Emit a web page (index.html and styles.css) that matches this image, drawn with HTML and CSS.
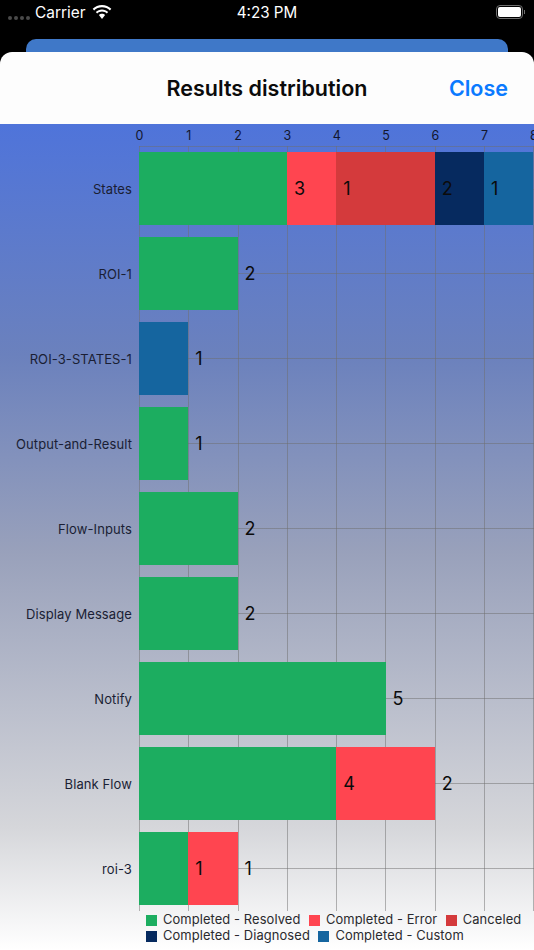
FILE: index.html
```html
<!DOCTYPE html>
<html lang="en">
<head>
    <meta charset="UTF-8">
    <meta name="viewport" content="width=device-width, initial-scale=1.0">
    <title>Results distribution</title>
    <link rel="stylesheet" href="styles.css">
</head>
<body>
    <div class="status-bar">
        <div class="signal"><i></i><i></i><i></i><i></i></div>
        <span class="carrier">Carrier</span>
        <svg class="wifi" width="20" height="15" viewBox="0 0 20 15">
            <path d="M10 2.2c3 0 5.8 1.2 7.9 3.2l1.4-1.6C16.800 1.400 13.500 0 10 0S3.200 1.400.7 3.800l1.400 1.600C4.200 3.400 7 2.200 10 2.200z" fill="#fff"/>
            <path d="M10 6.600c1.800 0 3.500.7 4.800 1.900l1.400-1.600C14.500 5.300 12.300 4.400 10 4.400s-4.500.9-6.200 2.500l1.400 1.600C6.500 7.300 8.200 6.600 10 6.600z" fill="#fff"/>
            <path d="M10 8.800c-1.200 0-2.300.5-3.100 1.200L10 14l3.100-4C12.300 9.300 11.200 8.800 10 8.800z" fill="#fff"/>
        </svg>
        <span class="time">4:23 PM</span>
        <div class="battery"><div class="battery-fill"></div></div>
        <div class="battery-cap"></div>
    </div>

    <div class="back-card"></div>

    <div class="sheet">
        <div class="sheet-header">
            <h1>Results distribution</h1>
            <a class="close">Close</a>
        </div>

        <div class="chart">
            <div class="axis">
                <span>0</span><span>1</span><span>2</span><span>3</span><span>4</span><span>5</span><span>6</span><span>7</span><span>8</span>
            </div>

            <div class="rows">
                <div class="row">
                    <div class="row-label">States</div>
                    <div class="plot">
                        <div class="seg resolved" style="width: 147.9px"><span class="value">3</span></div>
                        <div class="seg error" style="width: 49.3px"><span class="value">1</span></div>
                        <div class="seg canceled" style="width: 98.6px"><span class="value">2</span></div>
                        <div class="seg diagnosed" style="width: 49.3px"><span class="value">1</span></div>
                        <div class="seg custom" style="width: 49.3px"></div>
                    </div>
                </div>
                <div class="row">
                    <div class="row-label">ROI-1</div>
                    <div class="plot">
                        <div class="seg resolved" style="width: 98.6px"><span class="value">2</span></div>
                    </div>
                </div>
                <div class="row">
                    <div class="row-label">ROI-3-STATES-1</div>
                    <div class="plot">
                        <div class="seg custom" style="width: 49.3px"><span class="value">1</span></div>
                    </div>
                </div>
                <div class="row">
                    <div class="row-label">Output-and-Result</div>
                    <div class="plot">
                        <div class="seg resolved" style="width: 49.3px"><span class="value">1</span></div>
                    </div>
                </div>
                <div class="row">
                    <div class="row-label">Flow-Inputs</div>
                    <div class="plot">
                        <div class="seg resolved" style="width: 98.6px"><span class="value">2</span></div>
                    </div>
                </div>
                <div class="row">
                    <div class="row-label">Display Message</div>
                    <div class="plot">
                        <div class="seg resolved" style="width: 98.6px"><span class="value">2</span></div>
                    </div>
                </div>
                <div class="row">
                    <div class="row-label">Notify</div>
                    <div class="plot">
                        <div class="seg resolved" style="width: 246.5px"><span class="value">5</span></div>
                    </div>
                </div>
                <div class="row">
                    <div class="row-label">Blank Flow</div>
                    <div class="plot">
                        <div class="seg resolved" style="width: 197.2px"><span class="value">4</span></div>
                        <div class="seg error" style="width: 98.6px"><span class="value">2</span></div>
                    </div>
                </div>
                <div class="row">
                    <div class="row-label">roi-3</div>
                    <div class="plot">
                        <div class="seg resolved" style="width: 49.3px"><span class="value">1</span></div>
                        <div class="seg error" style="width: 49.3px"><span class="value">1</span></div>
                    </div>
                </div>
            </div>

            <div class="legend">
                <div class="legend-item"><i class="resolved"></i>Completed - Resolved</div>
                <div class="legend-item"><i class="error"></i>Completed - Error</div>
                <div class="legend-item"><i class="canceled"></i>Canceled</div>
                <div class="legend-item"><i class="diagnosed"></i>Completed - Diagnosed</div>
                <div class="legend-item"><i class="custom"></i>Completed - Custom</div>
            </div>
        </div>
    </div>
</body>
</html>
```

FILE: styles.css
```css
html, body {
    margin: 0;
    height: 950px;
    overflow: hidden;
    background: #000;
    font-family: 'Inter', 'Liberation Sans', sans-serif;
}

/* status bar */
.status-bar {
    height: 52px;
    display: flex;
    align-items: flex-start;
    padding: 0 9px 0 8px;
    box-sizing: border-box;
    color: #fff;
    font-size: 15.4px;
    line-height: 26px;
}
.signal {
    display: flex;
    gap: 2px;
    margin-top: 16px;
    margin-right: 5px;
}
.signal i {
    width: 4px;
    height: 4px;
    border-radius: 50%;
    background: #4a4a4a;
}
.wifi {
    margin: 5px 0 0 7px;
}
.time {
    position: absolute;
    left: 0;
    right: 0;
    text-align: center;
    font-size: 15.2px;
}
.battery {
    margin-left: auto;
    margin-top: 5px;
    width: 27px;
    height: 14px;
    box-sizing: border-box;
    border: 1px solid #6e6e6e;
    border-radius: 4px;
    padding: 1px;
}
.battery-fill {
    height: 100%;
    background: #fff;
    border-radius: 2px;
}
.battery-cap {
    width: 1px;
    height: 4px;
    margin: 10px 0 0 1px;
    background: #6e6e6e;
}

/* card of the page behind the sheet */
.back-card {
    position: absolute;
    top: 39px;
    left: 26px;
    width: 482px;
    height: 40px;
    background: #3f78c8;
    border-radius: 10px 10px 0 0;
}

.sheet {
    position: relative;
    border-radius: 12px 12px 0 0;
    overflow: hidden;
}
.sheet-header {
    height: 72px;
    background: #fdfdfd;
    display: flex;
    align-items: center;
    justify-content: center;
}
.sheet-header h1 {
    margin: 0;
    font-size: 21.5px;
    font-weight: 600;
    color: #0b0b0b;
}
.close {
    position: absolute;
    top: 22px;
    right: 26px;
    font-size: 21.5px;
    line-height: 28px;
    font-weight: 600;
    color: #0a7aff;
}

/* chart */
.chart {
    height: 826px;
    overflow: hidden;
    background: linear-gradient(180deg, #4f74da 0%, #6b81bd 28%, #99a1bb 52%, #d5d6da 85%, #ffffff 100%);
}
.axis {
    height: 22px;
    display: flex;
    margin-left: 114.9px;
    width: 450px;
    font-size: 12.5px;
    line-height: 24px;
    color: #12162e;
}
.axis span {
    flex: 0 0 49.3px;
    text-align: center;
}
.rows {
    --line: rgba(110, 110, 110, 0.5);
}
.row {
    display: flex;
    height: 85px;
}
.row-label {
    width: 139px;
    padding-right: 7px;
    box-sizing: border-box;
    align-self: center;
    text-align: right;
    font-size: 13px;
    letter-spacing: 0.1px;
    white-space: nowrap;
    color: #1a1e34;
}
.plot {
    flex: 1;
    display: flex;
    padding: 6px 0 6.5px;
    box-sizing: border-box;
    background:
        linear-gradient(var(--line), var(--line)) center / 100% 1px no-repeat,
        repeating-linear-gradient(90deg, var(--line) 0, var(--line) 1px, transparent 1px, transparent 49.3px);
}
.row:first-child .plot {
    border-top: 1px solid var(--line);
    padding-top: 5px;
}
.seg {
    position: relative;
    flex: none;
}
.value {
    position: absolute;
    z-index: 1;
    left: 100%;
    top: 50%;
    margin-left: 7px;
    transform: translateY(-50%);
    font-size: 18px;
    color: #0b0b0b;
}
.resolved { background: #1cad60; }
.error { background: #ff4550; }
.canceled { background: #d43a3c; }
.diagnosed { background: #062a5f; }
.custom { background: #15659f; }

.legend {
    display: flex;
    flex-wrap: wrap;
    width: 388px;
    margin-left: 146px;
    padding-top: 1px;
    column-gap: 8.5px;
    font-size: 12.9px;
    line-height: 16px;
    letter-spacing: 0.1px;
    color: #2a2a2e;
}
.legend-item {
    display: flex;
    align-items: center;
    white-space: nowrap;
}
.legend-item i {
    width: 11px;
    height: 11px;
    margin-right: 6px;
}
```
